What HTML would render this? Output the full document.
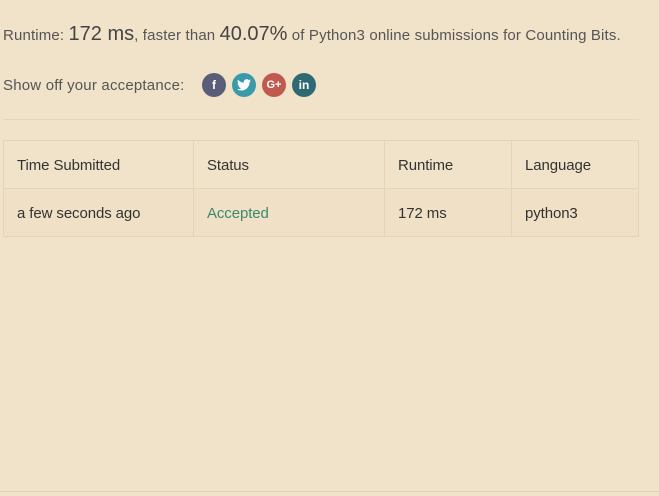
<!DOCTYPE html>
<html><head><style>
body{margin:0;width:659px;height:496px;background:#f1e3ca;font-family:"Liberation Sans",sans-serif;color:#555;position:relative;overflow:hidden}
.l1{position:absolute;left:3px;top:23px;font-size:15px;letter-spacing:0.15px;white-space:nowrap}
.big{font-size:20px;color:#444;letter-spacing:0}
.l2{position:absolute;left:3px;top:77px;font-size:15px;letter-spacing:0.2px}
.ic{position:absolute;top:73px;width:24px;height:24px;border-radius:50%;color:#fff;font-size:12px;font-weight:bold;text-align:center;line-height:24px}
.hr{position:absolute;left:3px;top:119px;width:636px;height:1px;background:#e5d6bc}
table{position:absolute;left:3px;top:140px;border-collapse:collapse;width:636px;font-size:15px;letter-spacing:-0.1px;color:#333}
td{border:1px solid #e5d3b6;height:46px;padding:1px 0 0 13px;box-sizing:border-box}
tr{height:48px}
tr.r2{background:#efe0c6}
.bot{position:absolute;left:0;top:491px;width:659px;height:1px;background:#e0d2b8}
</style></head><body>
<div class="l1">Runtime: <span class="big">172 ms</span>, faster than <span class="big">40.07%</span> of Python3 online submissions for Counting Bits.</div>
<div class="l2">Show off your acceptance:</div>
<div class="ic" style="left:202px;background:#5a5d78">f</div>
<div class="ic" style="left:232px;background:#3b9aaa">
<svg width="14" height="12" viewBox="0 0 24 20" style="margin-top:6px"><path fill="#fff" d="M24 2.4a10 10 0 0 1-2.8.8A5 5 0 0 0 23.3.4a10 10 0 0 1-3.1 1.2A4.9 4.9 0 0 0 11.8 6 14 14 0 0 1 1.7.9a4.9 4.9 0 0 0 1.5 6.6A4.9 4.9 0 0 1 1 6.9a4.9 4.9 0 0 0 3.9 4.8 5 5 0 0 1-2.2.1 4.9 4.9 0 0 0 4.6 3.4A9.9 9.9 0 0 1 0 17.3 14 14 0 0 0 7.5 19.5c9 0 14-7.5 14-14v-.6A10 10 0 0 0 24 2.4z"/></svg></div>
<div class="ic" style="left:262px;background:#c05a4e;font-size:11px">G+</div>
<div class="ic" style="left:292px;background:#2f6a74">in</div>
<div class="hr"></div>
<table>
<tr><td style="width:190px">Time Submitted</td><td style="width:191px">Status</td><td style="width:127px">Runtime</td><td>Language</td></tr>
<tr class="r2"><td>a few seconds ago</td><td style="color:#3a8a6e">Accepted</td><td>172 ms</td><td>python3</td></tr>
</table>
<div class="bot"></div>
</body></html>
